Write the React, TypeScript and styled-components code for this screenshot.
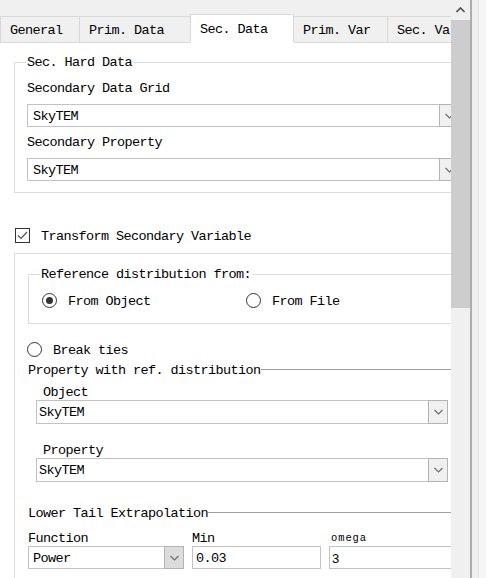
import React from 'react';
import styled, { createGlobalStyle } from 'styled-components';

const Global = createGlobalStyle`
  html, body { margin: 0; padding: 0; background: #f0f0f0; }
  body {
    font-family: "Liberation Mono", "DejaVu Sans Mono", monospace;
    font-size: 13.5px;
    letter-spacing: -0.6px;
    color: #000;
  }
  #root { width: 486px; height: 578px; }
`;

const Window = styled.div`
  display: flex;
  width: 486px;
  height: 578px;
  overflow: hidden;
  background: #f0f0f0;
`;

const Viewport = styled.div`
  width: 451px;
  flex: none;
  overflow: hidden;
  display: flex;
`;

const Content = styled.div`
  width: 484px;
  flex: none;
  display: flex;
  flex-direction: column;
`;

const TabBar = styled.div`
  display: flex;
  align-items: flex-end;
  height: 43px;
  flex: none;
`;

const Tab = styled.div<{ $w: number; $active?: boolean }>`
  box-sizing: border-box;
  position: relative;
  z-index: ${p => (p.$active ? 1 : 0)};
  width: ${p => p.$w}px;
  flex: none;
  height: ${p => (p.$active ? 29 : 27)}px;
  margin-right: -1px;
  padding: 1px 0 0 9px;
  display: flex;
  align-items: center;
  white-space: nowrap;
  overflow: hidden;
  background: ${p => (p.$active ? '#fff' : '#f0f0f0')};
  border: 1px solid #d9d9d9;
  border-bottom-color: ${p => (p.$active ? '#fff' : '#d9d9d9')};
`;

const Panel = styled.div`
  flex: 1;
  background: #fff;
  display: flex;
  flex-direction: column;
  margin-top: -1px;
  padding-top: 1px;
`;

const Group = styled.div<{ $mt: number; $ml: number; $pad: string; $w?: number }>`
  position: relative;
  box-sizing: border-box;
  width: ${p => (p.$w ? `${p.$w}px` : 'auto')};
  margin: ${p => p.$mt}px 0 0 ${p => p.$ml}px;
  padding: ${p => p.$pad};
  border: 1px solid #dcdcdc;
  display: flex;
  flex-direction: column;
`;

const GroupTitle = styled.span`
  position: absolute;
  top: -9px;
  left: 11px;
  padding: 1px 1px 0;
  line-height: 16px;
  background: #fff;
  white-space: nowrap;
`;

const Field = styled.div<{ $gap: number; $mt?: number }>`
  display: flex;
  flex-direction: column;
  gap: ${p => p.$gap}px;
  margin-top: ${p => p.$mt ?? 0}px;
`;

const Label = styled.div<{ $ml?: number; $small?: boolean }>`
  box-sizing: border-box;
  height: 16px;
  line-height: 16px;
  padding-top: ${p => (p.$small ? 1 : 2)}px;
  margin-left: ${p => p.$ml ?? 0}px;
  white-space: nowrap;
  font-size: ${p => (p.$small ? '10.5px' : '13.5px')};
  letter-spacing: ${p => (p.$small ? '0.9px' : '-0.6px')};
`;

const Combo = styled.div<{ $h: number; $w?: number; $ml?: number }>`
  box-sizing: border-box;
  display: flex;
  align-items: stretch;
  height: ${p => p.$h}px;
  width: ${p => (p.$w ? `${p.$w}px` : 'auto')};
  margin-left: ${p => p.$ml ?? 0}px;
  border: 1px solid #c2c2c2;
  background: #fff;
`;

const ComboText = styled.div<{ $pad: number }>`
  flex: 1;
  display: flex;
  align-items: center;
  padding: 1px 0 0 ${p => p.$pad}px;
  white-space: nowrap;
  overflow: hidden;
`;

const ArrowBox = styled.div<{ $shade?: boolean }>`
  box-sizing: border-box;
  width: 20px;
  flex: none;
  margin: -1px -1px -1px 0;
  display: flex;
  align-items: center;
  justify-content: center;
  border: 1px solid #b4b4b4;
  background: ${p => (p.$shade ? '#dcdcdc' : '#f0f0f0')};
`;

const LineEdit = styled.div<{ $pad: number; $sans?: boolean }>`
  box-sizing: border-box;
  height: 23px;
  display: flex;
  align-items: center;
  padding: 1px 0 0 ${p => p.$pad}px;
  border: 1px solid #c2c2c2;
  background: #fff;
  white-space: nowrap;
  font-family: ${p => (p.$sans ? '"Liberation Sans", Arial, sans-serif' : 'inherit')};
  font-size: ${p => (p.$sans ? '13px' : 'inherit')};
  letter-spacing: ${p => (p.$sans ? '0' : 'inherit')};
`;

const CheckRow = styled.div<{ $mt: number; $ml: number }>`
  display: flex;
  align-items: center;
  gap: 11px;
  height: 16px;
  margin: ${p => p.$mt}px 0 0 ${p => p.$ml}px;
  white-space: nowrap;
`;

const RowText = styled.span`
  padding-top: 2px;
`;

const CheckBox = styled.div`
  box-sizing: border-box;
  width: 15px;
  height: 15px;
  flex: none;
  border: 1px solid #333;
  background: #fff;
  display: flex;
  align-items: center;
  justify-content: center;
`;

const RadioRow = styled.div<{ $mt: number; $ml: number }>`
  display: grid;
  grid-template-columns: 204px auto;
  height: 16px;
  margin: ${p => p.$mt}px 0 0 ${p => p.$ml}px;
`;

const RadioOption = styled.div`
  display: flex;
  align-items: center;
  gap: 11px;
  white-space: nowrap;
`;

const RadioCircle = styled.div<{ $on?: boolean }>`
  box-sizing: border-box;
  width: 15px;
  height: 15px;
  flex: none;
  border-radius: 50%;
  border: 1px solid #333;
  background: #fff;
  display: flex;
  align-items: center;
  justify-content: center;
  &::after {
    content: '';
    display: ${p => (p.$on ? 'block' : 'none')};
    width: 7px;
    height: 7px;
    border-radius: 50%;
    background: #333;
  }
`;

const Frame = styled.div`
  box-sizing: border-box;
  flex: 1;
  width: 456px;
  margin: 10px 0 0 14px;
  padding-left: 13px;
  border: 1px solid #dcdcdc;
  border-bottom: none;
  display: flex;
  flex-direction: column;
`;

const Header = styled.div<{ $mt: number }>`
  display: flex;
  align-items: center;
  height: 16px;
  margin-top: ${p => p.$mt}px;
  white-space: nowrap;
`;

const HeaderLine = styled.div`
  flex: 1;
  height: 1px;
  background: #a0a0a0;
`;

const ParamGrid = styled.div`
  display: grid;
  grid-template-columns: 156px 129px 150px;
  grid-template-rows: 16px 23px;
  column-gap: 8px;
  row-gap: 1px;
  margin-top: 9px;
`;

const ScrollTrack = styled.div`
  width: 19px;
  flex: none;
  background: #f0f0f0;
  display: flex;
  flex-direction: column;
`;

const ScrollArrow = styled.div`
  height: 20px;
  display: flex;
  align-items: center;
  justify-content: center;
`;

const ScrollThumb = styled.div`
  height: 288px;
  background: #cdcdcd;
`;

const Edge = styled.div`
  flex: 1;
  display: flex;
  border-left: 2px solid #acacac;
  background: #f0f0f0;
`;

const EdgeInner = styled.div`
  margin-left: 6px;
  flex: 1;
  border-left: 1px solid #e2e2e2;
  background: #f6f6f6;
`;

const Chevron = ({ up }: { up?: boolean }) => (
  <svg width="9" height="6" viewBox="0 0 9 6">
    <polyline
      points={up ? '0.5,5 4.5,1 8.5,5' : '0.5,1 4.5,5 8.5,1'}
      fill="none"
      stroke={up ? '#505050' : '#6a6a6a'}
      strokeWidth={up ? 1.6 : 1.1}
    />
  </svg>
);

const ComboBox = ({ text, h, pad, w, ml, shade }: { text: string; h: number; pad: number; w?: number; ml?: number; shade?: boolean }) => (
  <Combo $h={h} $w={w} $ml={ml}>
    <ComboText $pad={pad}>{text}</ComboText>
    <ArrowBox $shade={shade}>
      <Chevron />
    </ArrowBox>
  </Combo>
);

const tabs = [
  { label: 'General', w: 80 },
  { label: 'Prim. Data', w: 112 },
  { label: 'Sec. Data', w: 104, active: true },
  { label: 'Prim. Var', w: 95 },
  { label: 'Sec. Va', w: 95 },
];

export default function App() {
  return (
    <>
      <Global />
      <Window>
        <Viewport>
          <Content>
            <TabBar>
              {tabs.map(t => (
                <Tab key={t.label} $w={t.w} $active={t.active}>
                  {t.label}
                </Tab>
              ))}
            </TabBar>
            <Panel>
              <Group $mt={19} $ml={14} $pad="16px 10px 11px 12px" $w={456}>
                <GroupTitle>Sec. Hard Data</GroupTitle>
                <Field $gap={9}>
                  <Label>Secondary Data Grid</Label>
                  <ComboBox text="SkyTEM" h={23} pad={5} />
                </Field>
                <Field $gap={9} $mt={6}>
                  <Label>Secondary Property</Label>
                  <ComboBox text="SkyTEM" h={23} pad={5} />
                </Field>
              </Group>

              <CheckRow $mt={34} $ml={15}>
                <CheckBox>
                  <svg width="13" height="13" viewBox="0 0 13 13">
                    <polyline points="2,6.5 5,9.5 11,3" fill="none" stroke="#555" strokeWidth="1.2" />
                  </svg>
                </CheckBox>
                <RowText>Transform Secondary Variable</RowText>
              </CheckRow>

              <Frame>
                <Group $mt={20} $ml={0} $pad="17px 0 15px 13px">
                  <GroupTitle>Reference distribution from:</GroupTitle>
                  <RadioRow $mt={0} $ml={0}>
                    <RadioOption>
                      <RadioCircle $on />
                      <RowText>From Object</RowText>
                    </RadioOption>
                    <RadioOption>
                      <RadioCircle />
                      <RowText>From File</RowText>
                    </RadioOption>
                  </RadioRow>
                </Group>

                <RadioRow $mt={17} $ml={-1}>
                  <RadioOption>
                    <RadioCircle />
                    <RowText>Break ties</RowText>
                  </RadioOption>
                </RadioRow>

                <Header $mt={4}>
                  <RowText>Property with ref. distribution</RowText>
                  <HeaderLine />
                </Header>

                <Field $gap={1} $mt={6}>
                  <Label $ml={15}>Object</Label>
                  <ComboBox text="SkyTEM" h={24} pad={2} w={412} ml={8} />
                </Field>
                <Field $gap={1} $mt={17}>
                  <Label $ml={15}>Property</Label>
                  <ComboBox text="SkyTEM" h={24} pad={2} w={412} ml={8} />
                </Field>

                <Header $mt={22}>
                  <RowText>Lower Tail Extrapolation</RowText>
                  <HeaderLine />
                </Header>

                <ParamGrid>
                  <Label>Function</Label>
                  <Label>Min</Label>
                  <Label $ml={2} $small>omega</Label>
                  <ComboBox text="Power" h={23} pad={4} shade />
                  <LineEdit $pad={3}>0.03</LineEdit>
                  <LineEdit $pad={2} $sans>3</LineEdit>
                </ParamGrid>
              </Frame>
            </Panel>
          </Content>
        </Viewport>
        <ScrollTrack>
          <ScrollArrow>
            <Chevron up />
          </ScrollArrow>
          <ScrollThumb />
        </ScrollTrack>
        <Edge>
          <EdgeInner />
        </Edge>
      </Window>
    </>
  );
}
